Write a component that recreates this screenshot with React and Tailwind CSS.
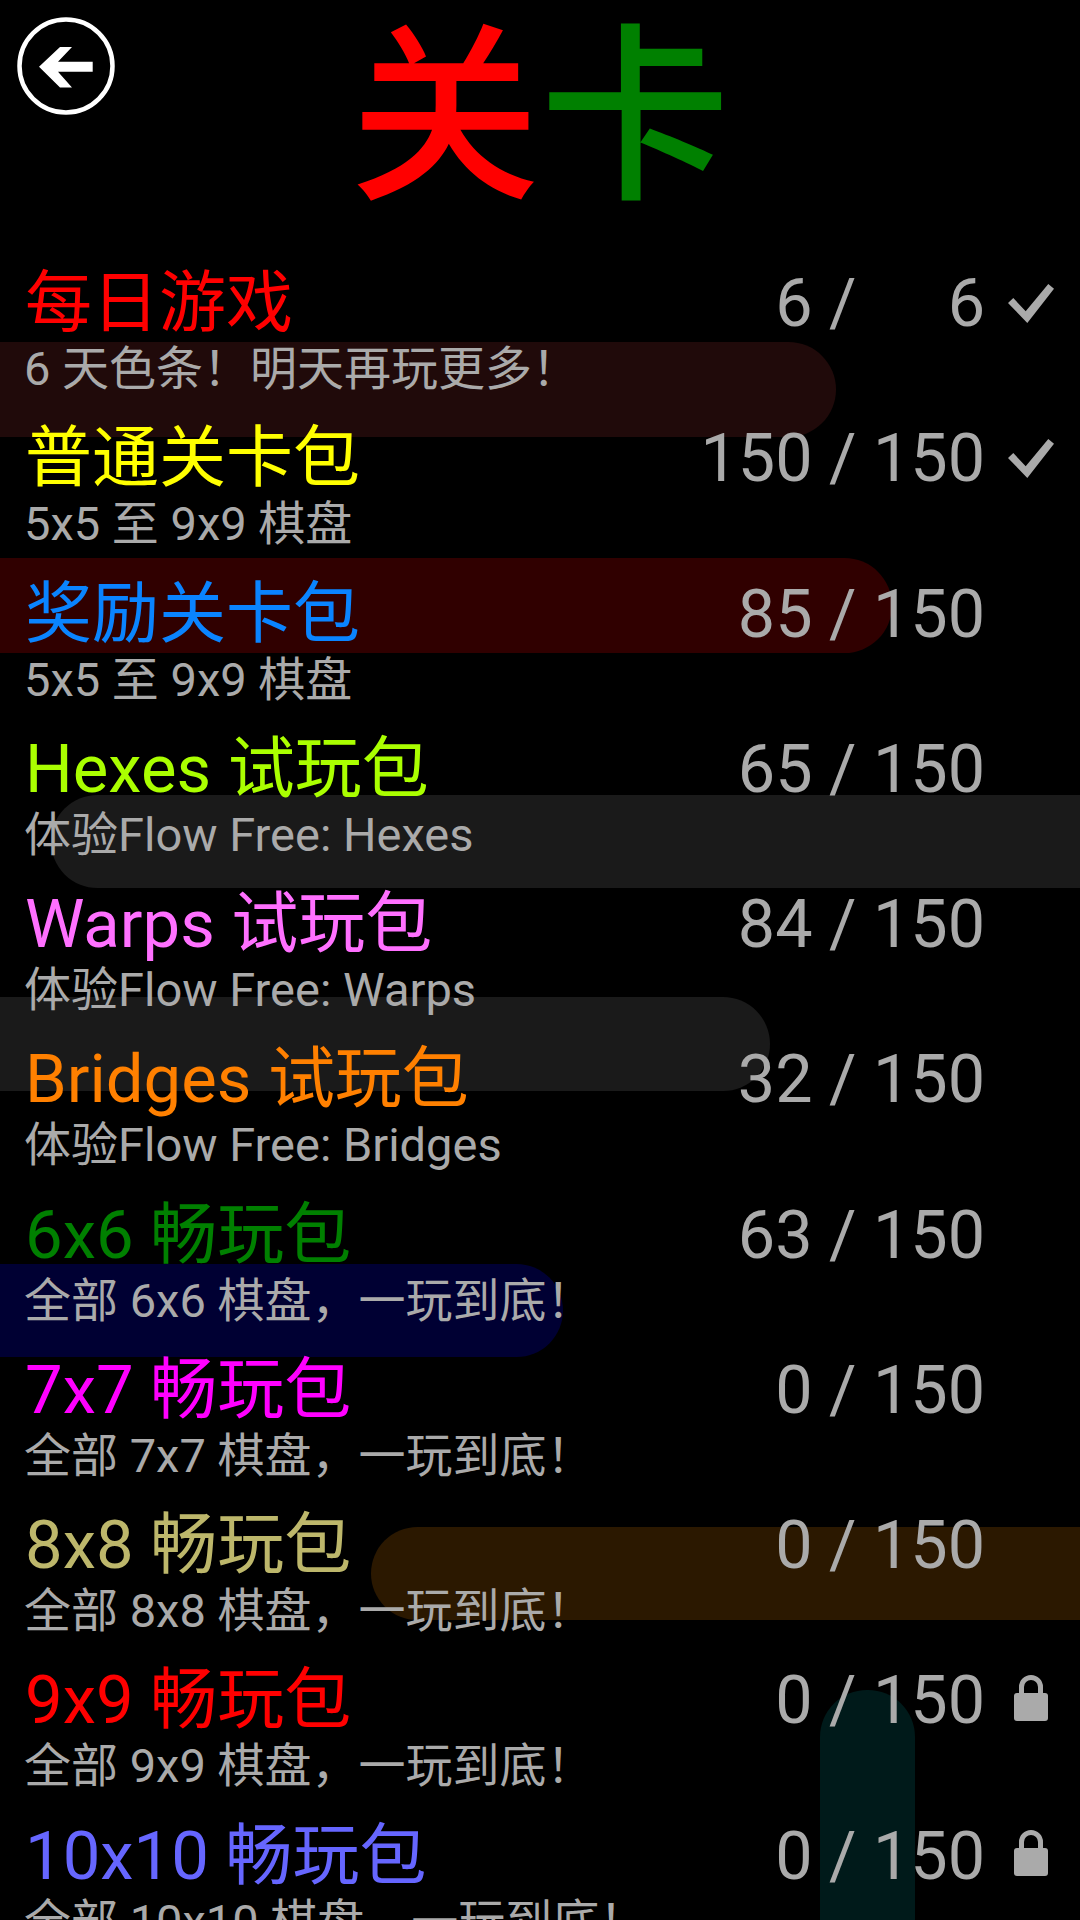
import React from 'react';

const rows = [
  { title: '每日游戏', sub: '6 天色条！明天再玩更多！', color: 'text-[#ff0000]', done: 6, total: 6, icon: 'check' },
  { title: '普通关卡包', sub: '5x5 至 9x9 棋盘', color: 'text-[#ffff00]', done: 150, total: 150, icon: 'check' },
  { title: '奖励关卡包', sub: '5x5 至 9x9 棋盘', color: 'text-[#0a84ff]', done: 85, total: 150 },
  { title: 'Hexes 试玩包', sub: '体验Flow Free: Hexes', color: 'text-[#aaff00]', done: 65, total: 150 },
  { title: 'Warps 试玩包', sub: '体验Flow Free: Warps', color: 'text-[#ff70ff]', done: 84, total: 150 },
  { title: 'Bridges 试玩包', sub: '体验Flow Free: Bridges', color: 'text-[#ff8000]', done: 32, total: 150 },
  { title: '6x6 畅玩包', sub: '全部 6x6 棋盘，一玩到底！', color: 'text-[#008000]', done: 63, total: 150 },
  { title: '7x7 畅玩包', sub: '全部 7x7 棋盘，一玩到底！', color: 'text-[#ff00ff]', done: 0, total: 150 },
  { title: '8x8 畅玩包', sub: '全部 8x8 棋盘，一玩到底！', color: 'text-[#bdb76b]', done: 0, total: 150 },
  { title: '9x9 畅玩包', sub: '全部 9x9 棋盘，一玩到底！', color: 'text-[#ff0000]', done: 0, total: 150, icon: 'lock' },
  { title: '10x10 畅玩包', sub: '全部 10x10 棋盘，一玩到底！', color: 'text-[#6666ff]', done: 0, total: 150, icon: 'lock' },
];

// background flows drifting behind the list
function Pills() {
  return (
    <>
      <div className="absolute left-0 top-[342px] h-[95px] w-[836px] rounded-r-[48px] bg-[#200a0a]" />
      <div className="absolute left-0 top-[558px] h-[95px] w-[892px] rounded-r-[48px] bg-[#300000]" />
      <div className="absolute left-[51px] top-[795px] h-[93px] w-[1029px] rounded-l-[47px] bg-[#1a1a1a]" />
      <div className="absolute left-0 top-[997px] h-[94px] w-[770px] rounded-r-[47px] bg-[#1a1a1a]" />
      <div className="absolute left-0 top-[1264px] h-[93px] w-[563px] rounded-r-[47px] bg-[#000033]" />
      <div className="absolute left-[371px] top-[1527px] h-[93px] w-[709px] rounded-l-[47px] bg-[#2b1800]" />
      <div className="absolute left-[820px] top-[1690px] h-[240px] w-[95px] rounded-t-[47px] bg-[#001a1a]" />
    </>
  );
}

function BackIcon() {
  return (
    <svg width="98" height="98" viewBox="0 0 98 98" fill="none">
      <circle cx="49" cy="49" r="46.5" stroke="#fff" strokeWidth="4.5" />
      <path d="M22 49.7 L43 30 H55 L41 44.7 H75.7 V54.7 H41 L55 70.5 H43 Z" fill="#fff" />
    </svg>
  );
}

function CheckIcon() {
  return (
    <svg width="46" height="39" viewBox="0 0 46 39">
      <path d="M0 19 L5.3 14 L17.7 27.3 L40.3 0 L46 4.7 L19.3 39 Z" fill="#aaaaaa" />
    </svg>
  );
}

function LockIcon() {
  return (
    <svg width="34" height="46" viewBox="0 0 34 46" className="-mt-[5px]">
      <path d="M7.5 20 V12 a9.5 9.5 0 0 1 19 0 V20" fill="none" stroke="#aaaaaa" strokeWidth="5" />
      <rect x="0" y="18" width="34" height="28" rx="3" fill="#aaaaaa" />
    </svg>
  );
}

function Row({ row }) {
  return (
    <div className="flex h-[155.25px] items-start pl-[25px]">
      <div className="flex-1 min-w-0">
        <div className={`h-[80px] text-[67px] leading-[80px] whitespace-nowrap ${row.color}`}>{row.title}</div>
        <div className="-ml-[1px] text-[47px] leading-[52px] text-[#aaaaaa] whitespace-nowrap">{row.sub}</div>
      </div>
      <div className="flex h-[80px] items-center text-[66.5px] leading-[80px] text-[#aaaaaa] whitespace-pre">
        <span>{row.done} / </span>
        <span className="w-[112px] text-right">{row.total}</span>
      </div>
      <div className="flex h-[80px] w-[95px] items-center justify-center pr-[3px]">
        {row.icon === 'check' && <CheckIcon />}
        {row.icon === 'lock' && <LockIcon />}
      </div>
    </div>
  );
}

export default function App() {
  return (
    <div className="relative h-[1920px] w-[1080px] overflow-hidden bg-black font-['Roboto','Noto_Sans_CJK_SC',sans-serif]">
      <Pills />
      <header className="relative grid h-[263px] grid-cols-[1fr_auto_1fr] items-start">
        <div className="pl-[17px] pt-[17px]"><BackIcon /></div>
        <div className="text-[190px] font-medium leading-[238px] whitespace-nowrap">
          <span className="text-[#ff0000]">关</span>
          <span className="text-[#008000]">卡</span>
        </div>
      </header>
      <div className="relative">
        {rows.map((row) => <Row key={row.title} row={row} />)}
      </div>
    </div>
  );
}
